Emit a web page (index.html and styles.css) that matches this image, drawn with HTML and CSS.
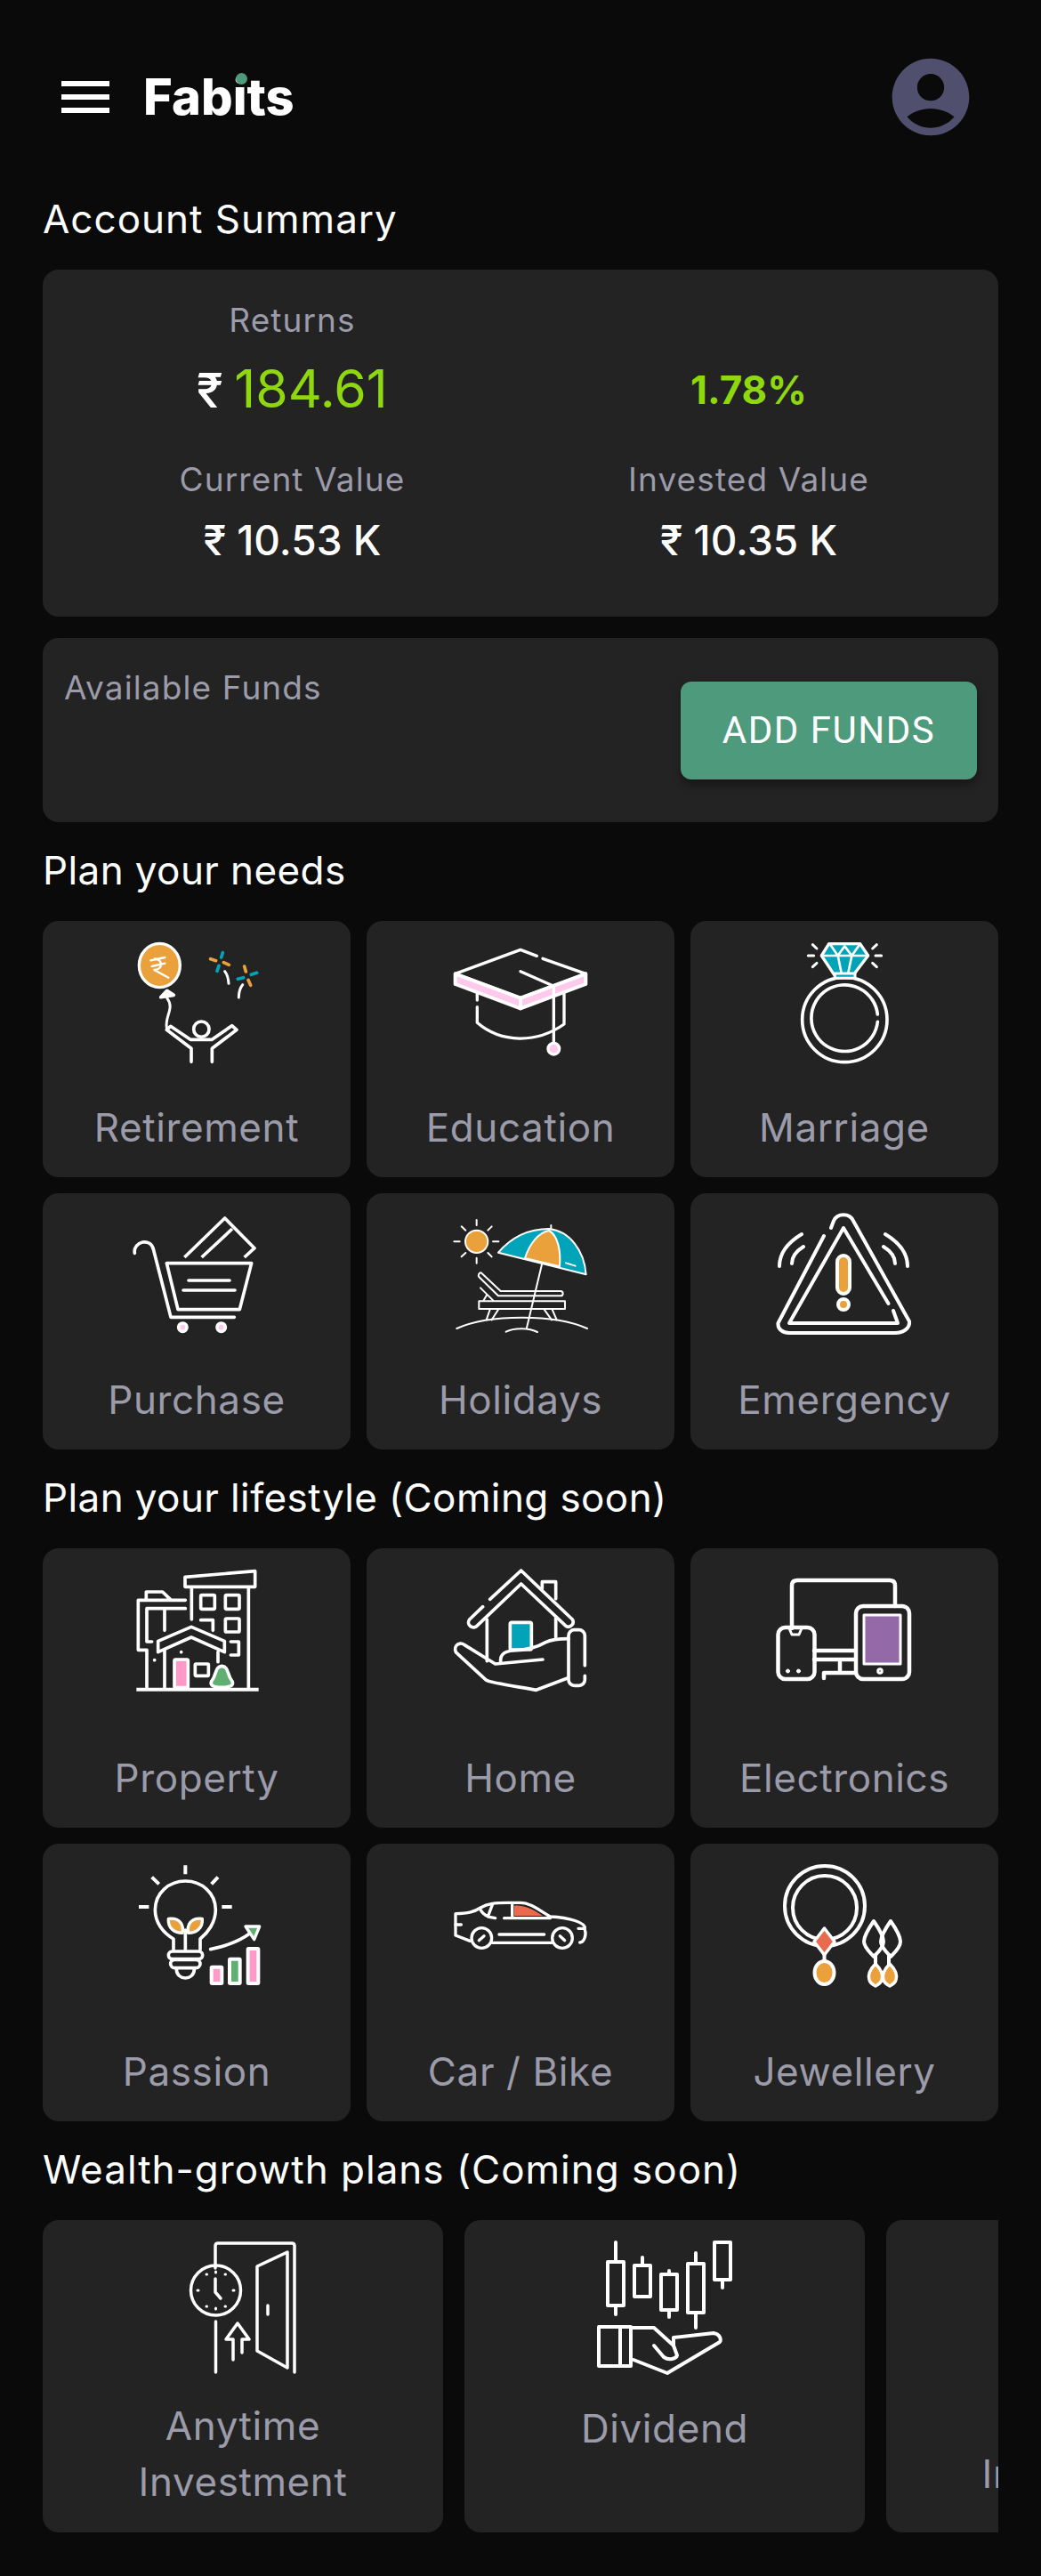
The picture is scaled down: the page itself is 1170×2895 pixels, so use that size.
FILE: index.html
```html
<!DOCTYPE html>
<html lang="en">
<head>
    <meta charset="UTF-8">
    <meta name="viewport" content="width=device-width, initial-scale=1.0">
    <title>Fabits</title>
    <link rel="stylesheet" href="styles.css">
</head>
<body>

    <header class="topbar">
        <div class="brand">
            <div class="menu-icon"><span></span><span></span><span></span></div>
            <div class="logo">Fabits<span class="logo-dot"></span></div>
        </div>
        <svg class="avatar" viewBox="0 0 24 24"><path d="M12 2C6.48 2 2 6.48 2 12s4.48 10 10 10 10-4.48 10-10S17.52 2 12 2zm0 4c1.93 0 3.5 1.57 3.5 3.5S13.93 13 12 13s-3.5-1.57-3.5-3.5S10.07 6 12 6zm0 14c-2.03 0-4.43-.82-6.14-2.88C7.55 15.8 9.68 15 12 15s4.45.8 6.14 2.12C16.43 19.18 14.03 20 12 20z"/></svg>
    </header>

    <main class="content">
        <section>
            <h2 class="section-title">Account Summary</h2>
            <div class="card summary">
                <div class="stat">
                    <div class="stat-label">Returns</div>
                    <div class="stat-value stat-value-big"><span class="rupee">₹</span> <span class="green">184.61</span></div>
                </div>
                <div class="stat">
                    <div class="stat-label"></div>
                    <div class="stat-value stat-value-big"><span class="green percent">1.78%</span></div>
                </div>
                <div class="stat stat-lower">
                    <div class="stat-label">Current Value</div>
                    <div class="stat-value">₹ 10.53 K</div>
                </div>
                <div class="stat stat-lower">
                    <div class="stat-label">Invested Value</div>
                    <div class="stat-value">₹ 10.35 K</div>
                </div>
            </div>
            <div class="card funds">
                <div class="funds-label">Available Funds</div>
                <button class="add-funds">ADD FUNDS</button>
            </div>
        </section>

        <section>
            <h2 class="section-title title-tight">Plan your needs</h2>
            <div class="grid grid-needs">
                <div class="card tile">
                    <svg class="icon" viewBox="78 30 510 450" stroke-width="11">
                        <ellipse cx="208" cy="135" rx="69" ry="74" class="orange" stroke-width="10"/>
                        <path d="M178 118L226 108M182 138L226 128M192 112C218 112 222 150 190 150L238 176" stroke-width="7"/>
                        <path d="M233 220L256 235L212 242Z" class="white"/>
                        <path d="M233 245C260 280 225 305 232 345" stroke-width="9"/>
                        <circle cx="349" cy="350" r="26"/>
                        <path d="M315 460V415L232 352L245 340L312 385H385L452 338L468 352L385 415V460"/>
                        <path d="M421 92L416 108M402 154L408 136M517 166L536 160M472 181L491 176" class="line-teal"/>
                        <path d="M380 113L398 119M424 125L442 133M494 138L499 156M507 184L515 202" class="line-orange"/>
                        <path d="M428 155C436 165 440 180 441 196M488 200C478 212 475 228 475 243" stroke-width="9"/>
                    </svg>
                    <div class="tile-label">Retirement</div>
                </div>
                <div class="card tile">
                    <svg class="icon" viewBox="30 0 510 450" stroke-width="10">
                        <path d="M65 133L285 215V250L65 168Z" class="pink" stroke-width="12"/>
                        <path d="M285 215L505 133V168L285 250Z" class="pink" stroke-width="12"/>
                        <path d="M340 73L285 52L65 133L285 215L505 133L360 82"/>
                        <path d="M285 125L397 175V365"/>
                        <circle cx="397" cy="386" r="19" class="pink"/>
                        <path d="M139 200V222M139 245V298C220 368 340 368 432 303V200"/>
                    </svg>
                    <div class="tile-label">Education</div>
                </div>
                <div class="card tile">
                    <svg class="icon" viewBox="1122 0 510 450" stroke-width="11">
                        <circle cx="1378" cy="288" r="143"/>
                        <path d="M1489 270A112 112 0 1 0 1489 295"/>
                        <path d="M1325 32H1430L1457 72L1405 140H1345L1300 72Z" class="teal" stroke-width="10"/>
                        <path d="M1300 72H1457M1330 35L1355 72L1378 40L1402 72L1428 35M1355 72L1367 130M1402 72L1390 130" stroke-width="8"/>
                        <rect x="1345" y="132" width="68" height="16" class="teal" stroke-width="9"/>
                        <path d="M1270 35L1284 48M1255 72H1274M1270 110L1284 97M1486 35L1472 48M1482 72H1502M1486 110L1472 97" stroke-width="9"/>
                    </svg>
                    <div class="tile-label">Marriage</div>
                </div>
                <div class="card tile">
                    <svg class="icon" viewBox="18 3 510 450" stroke-width="11">
                        <path d="M64 160C58 120 120 105 128 150L186 376H400"/>
                        <path d="M172 194H458L418 350H210Z"/>
                        <path d="M246 252H384M228 285H402"/>
                        <circle cx="226" cy="410" r="14" class="pink"/>
                        <circle cx="356" cy="410" r="14" class="pink"/>
                        <path d="M232 174L368 42L468 143L434 174M290 174L393 78" stroke-linecap="butt"/>
                    </svg>
                    <div class="tile-label">Purchase</div>
                </div>
                <div class="card tile">
                    <svg class="icon" viewBox="1110 3 510 450" stroke-width="6">
                        <circle cx="1217" cy="121" r="38" class="orange"/>
                        <path d="M1217 48V66M1217 176V194M1141 121H1160M1272 121H1291M1166 70L1180 83M1268 70L1255 83M1166 172L1180 159M1268 172L1255 159"/>
                        <path d="M1290 158C1340 100 1400 78 1461 78C1530 85 1580 150 1586 232Z" class="teal"/>
                        <path d="M1380 177C1395 130 1425 90 1461 84C1490 100 1502 150 1497 205Z" class="orange"/>
                        <path d="M1518 193L1550 203M1468 66V78M1437 198L1386 412M1316 425C1345 410 1395 412 1422 426"/>
                        <path d="M1232 226L1298 288H1500A8 8 0 0 1 1500 304H1290L1225 240A9 9 0 0 1 1232 226Z"/>
                        <path d="M1230 277L1273 320M1252 300L1240 320"/>
                        <rect x="1225" y="322" width="290" height="26"/>
                        <path d="M1262 350L1250 385M1290 350L1268 385M1445 350L1470 385M1472 350L1487 385"/>
                        <path d="M1150 414C1260 365 1480 365 1590 414"/>
                    </svg>
                    <div class="tile-label">Holidays</div>
                </div>
                <div class="card tile">
                    <svg class="icon" viewBox="864 1356 170 150" stroke-width="4">
                        <path d="M926 1389L874.5 1487C874 1494 880 1498 887 1498H1006C1016 1498 1023 1492 1022 1485L959 1372C955 1363 941 1363 937 1372L934 1380"/>
                        <path d="M998.5 1465L948 1380L887 1487H1009L1004 1473"/>
                        <rect x="941" y="1411" width="14" height="43" rx="7" class="orange"/>
                        <circle cx="948" cy="1466" r="6" class="orange"/>
                        <path d="M901 1387C886 1396 876 1408 876 1423M903 1401C895 1406 890 1412 890 1420M995 1387C1010 1396 1020 1408 1020 1423M993 1401C1001 1406 1006 1412 1006 1420"/>
                    </svg>
                    <div class="tile-label">Emergency</div>
                </div>
            </div>
        </section>

        <section>
            <h2 class="section-title title-tight">Plan your lifestyle (Coming soon)</h2>
            <div class="grid grid-lifestyle">
                <div class="card tile">
                    <svg class="icon" viewBox="-12 0 510 450" stroke-width="11">
                        <path d="M204 52L440 32V85H204Z"/>
                        <path d="M226 195V88M418 88V425"/>
                        <rect x="257" y="113" width="47" height="47" rx="4"/>
                        <rect x="340" y="113" width="47" height="47" rx="4"/>
                        <rect x="340" y="192" width="47" height="45" rx="4"/>
                        <path d="M257 197H298V232M358 270H385V315H358"/>
                        <path d="M205 130H46V298H75V425M205 158H75V270H92M135 165V232M73 125V102H128L155 128"/>
                        <path d="M113 268L225 220L337 268V305L225 255L113 305Z"/>
                        <path d="M135 300V425M315 305V338"/>
                        <rect x="168" y="330" width="46" height="95" rx="4" class="rose"/>
                        <rect x="238" y="345" width="45" height="40" rx="3"/>
                        <path d="M191 305H191.1M101 332H101.1"/>
                        <path d="M328 352C352 355 345 380 362 402C372 420 350 424 328 424C306 424 284 420 294 402C311 380 304 355 328 352Z" class="leaf"/>
                        <path d="M40 431H452" stroke-linecap="butt" stroke-width="12"/>
                    </svg>
                    <div class="tile-label">Property</div>
                </div>
                <div class="card tile">
                    <svg class="icon" viewBox="1080 0 510 450" stroke-width="11">
                        <rect x="1300" y="205" width="72" height="92" rx="5" class="teal"/>
                        <path d="M1232 127L1337 30L1510 195A16 16 0 0 1 1488 217L1337 75L1190 215A15 15 0 0 1 1163 195L1208 152"/>
                        <path d="M1408 90V68H1454V125M1222 195V335M1454 190V255"/>
                        <path d="M1268 340C1265 310 1285 302 1310 300C1360 298 1390 290 1420 272C1440 262 1470 260 1497 260"/>
                        <path d="M1410 330L1250 345L1145 280A17 17 0 0 0 1122 310L1220 400C1235 410 1350 425 1388 433L1495 392"/>
                        <path d="M1552 350V250A20 20 0 0 0 1532 230H1517A20 20 0 0 0 1497 250V398A20 20 0 0 0 1517 418H1532A20 20 0 0 0 1552 398V385"/>
                    </svg>
                    <div class="tile-label">Home</div>
                </div>
                <div class="card tile">
                    <svg class="icon" viewBox="864 1755 170 150" stroke-width="4.5">
                        <path d="M890 1830V1782Q890 1776 896 1776H1000Q1006 1776 1006 1782V1805"/>
                        <path d="M915 1855H961M915 1865H961M926 1886V1880H962M944 1868V1878"/>
                        <rect x="962" y="1805" width="60" height="82" rx="8"/>
                        <rect x="971" y="1815" width="41" height="55" class="purple" stroke-width="3"/>
                        <circle cx="989" cy="1878" r="1.5"/>
                        <rect x="874.5" y="1829" width="41" height="58" rx="8"/>
                        <path d="M887 1830L890 1837H898L901 1830" stroke-width="3"/>
                        <circle cx="885.5" cy="1878" r="2" class="white" stroke-width="1"/>
                        <circle cx="897.5" cy="1878" r="2" class="white" stroke-width="1"/>
                    </svg>
                    <div class="tile-label">Electronics</div>
                </div>
                <div class="card tile">
                    <svg class="icon" viewBox="-12 -6 510 450" stroke-width="11">
                        <path d="M205 22V52M92 62L116 85M315 62L293 85M48 162H82M328 162H362" stroke-linecap="butt" stroke-width="12"/>
                        <path d="M165 305V270C130 250 103 215 103 172C103 115 150 75 205 75C260 75 307 115 307 172C307 215 280 250 255 270V305"/>
                        <rect x="148" y="312" width="115" height="26" rx="13"/>
                        <rect x="155" y="340" width="100" height="28" rx="14"/>
                        <path d="M175 372C175 412 235 412 235 372M205 305V240"/>
                        <path d="M148 202C190 198 200 225 195 250C170 250 145 235 148 202Z" class="orange" stroke-width="10"/>
                        <path d="M262 202C220 198 210 225 215 250C240 250 265 235 262 202Z" class="orange" stroke-width="10"/>
                        <path d="M290 305C340 295 385 280 425 250"/>
                        <path d="M408 228H455L437 272Z" class="leaf" stroke-width="10"/>
                        <rect x="293" y="365" width="35" height="55" rx="2" class="rose" stroke-width="12"/>
                        <rect x="354" y="338" width="35" height="82" rx="2" class="leaf" stroke-width="12"/>
                        <rect x="416" y="303" width="35" height="117" rx="2" class="rose" stroke-width="12"/>
                    </svg>
                    <div class="tile-label">Passion</div>
                </div>
                <div class="card tile">
                    <svg class="icon" viewBox="1080 -6 510 450" stroke-width="10">
                        <path d="M1314 158C1340 155 1370 165 1410 192H1314Z" class="coral" stroke="none"/>
                        <path d="M1135 222H1116V185C1160 185 1180 178 1200 165C1225 150 1250 148 1290 148H1335C1370 148 1400 175 1435 195C1500 198 1555 215 1552 235H1530"/>
                        <path d="M1116 222V258L1165 277M1240 283H1440M1552 240C1558 255 1550 282 1535 282"/>
                        <circle cx="1204" cy="267" r="34"/>
                        <circle cx="1476" cy="267" r="34"/>
                        <path d="M1195 275L1212 260M1468 260L1484 275M1263 255H1415"/>
                        <path d="M1200 172C1210 190 1225 198 1250 200M1240 155L1225 195M1280 200H1435M1307 155V195"/>
                    </svg>
                    <div class="tile-label">Car / Bike</div>
                </div>
                <div class="card tile">
                    <svg class="icon" viewBox="864 2088 170 150" stroke-width="4">
                        <circle cx="927" cy="2143" r="45"/>
                        <circle cx="927" cy="2145" r="36"/>
                        <path d="M926.5 2168L938 2183L926.5 2198L915 2183Z" class="coral" stroke-width="3.5"/>
                        <path d="M926.5 2198V2206"/>
                        <ellipse cx="926.5" cy="2218" rx="11" ry="13" class="orange"/>
                        <path d="M982 2160C975 2170 971 2178 971 2183C971 2190 980 2197 982 2200C985 2197 993 2190 993 2183C993 2178 989 2170 982 2160Z"/>
                        <path d="M1001 2160C994 2170 990 2178 990 2183C990 2190 999 2197 1001 2200C1004 2197 1012 2190 1012 2183C1012 2178 1008 2170 1001 2160Z"/>
                        <path d="M984 2198V2208M999 2198V2208"/>
                        <path d="M984 2208C990 2214 993 2220 991 2226C990 2230 986 2232 984 2233C982 2232 978 2230 977 2226C975 2220 978 2214 984 2208Z" class="orange" stroke-width="3.5"/>
                        <path d="M1000 2208C1006 2214 1009 2220 1007 2226C1006 2230 1002 2232 1000 2233C998 2232 994 2230 993 2226C991 2220 994 2214 1000 2208Z" class="orange" stroke-width="3.5"/>
                    </svg>
                    <div class="tile-label">Jewellery</div>
                </div>
            </div>
        </section>

        <section>
            <h2 class="section-title">Wealth-growth plans (Coming soon)</h2>
            <div class="plans">
                <div class="card tile plan">
                    <svg class="icon icon-plan" viewBox="188 2512 170 160" stroke-width="3.5">
                        <path d="M242 2550V2525Q242 2522 245 2522H328Q331 2522 331 2525V2667"/>
                        <path d="M323 2532L289 2548V2643L323 2662Z"/>
                        <path d="M301 2592V2602"/>
                        <circle cx="242.5" cy="2575" r="28"/>
                        <path d="M242 2562V2577L248 2584"/>
                        <path d="M242.5 2554V2555M242.5 2595V2596M222 2575H223M262 2575H263M232 2557H232.5M253 2557H253.5M232 2593H232.5M253 2593H253.5" stroke-width="3"/>
                        <path d="M242.5 2610V2667"/>
                        <path d="M262 2653V2630H254L267 2612L280 2630H272V2645"/>
                    </svg>
                    <div class="tile-label plan-label">Anytime Investment</div>
                </div>
                <div class="card tile plan">
                    <svg class="icon icon-plan" viewBox="662 2512 170 160" stroke-width="4">
                        <path d="M692 2521V2543M692 2592V2602M722 2538V2547M752 2553V2557M752 2597V2605M782 2533V2545M782 2600V2617M812 2563V2572"/>
                        <rect x="683" y="2543" width="18" height="49"/>
                        <rect x="713" y="2547" width="18" height="35"/>
                        <rect x="743" y="2557" width="18" height="40"/>
                        <rect x="773" y="2545" width="18" height="55"/>
                        <rect x="803" y="2521" width="18" height="42"/>
                        <rect x="673" y="2616" width="36" height="44"/>
                        <path d="M697 2616V2660"/>
                        <path d="M709 2617H735L757 2637V2628L802 2623C809 2624 811 2630 809 2633L750 2668L712 2653"/>
                        <path d="M735 2637L746 2650C752 2654 760 2652 761 2648L757 2637"/>
                    </svg>
                    <div class="tile-label plan-label plan-label-single">Dividend</div>
                </div>
                <div class="card tile plan">
                    <div class="icon-plan"></div>
                    <div class="tile-label plan-label plan-label-low">Investment</div>
                </div>
            </div>
        </section>
    </main>

</body>
</html>
```

FILE: styles.css
```css
body {
    margin: 0;
    background-color: #0a0a0a;
    color: #fff;
    font-family: Inter, "Noto Sans", sans-serif;
}

.topbar {
    box-sizing: border-box;
    height: 216px;
    padding: 2px 72px 0 69px;
    display: flex;
    align-items: center;
    justify-content: space-between;
}

.brand {
    display: flex;
    align-items: center;
    gap: 38px;
}

.menu-icon {
    width: 54px;
    display: flex;
    flex-direction: column;
    gap: 9px;
}

.menu-icon span {
    display: block;
    height: 6px;
    background-color: #fff;
}

.logo {
    position: relative;
    font-size: 56px;
    font-weight: 800;
    line-height: 60px;
}

.logo-dot {
    position: absolute;
    left: 104px;
    top: 3px;
    width: 13px;
    height: 13px;
    border-radius: 50%;
    background-color: #4e9a7c;
}

.avatar {
    width: 104px;
    height: 104px;
    fill: #50506e;
}

.content {
    padding: 0 48px 48px;
    display: flex;
    flex-direction: column;
    gap: 24px;
}

.section-title {
    margin: 0 0 27px;
    font-size: 44px;
    font-weight: 400;
    letter-spacing: 1px;
    line-height: 60px;
}

.title-tight {
    letter-spacing: 0.4px;
}

.card {
    background-color: #232323;
    border-radius: 18px;
}

.summary {
    box-sizing: border-box;
    height: 390px;
    padding: 30px 24px 0;
    display: grid;
    grid-template-columns: 1fr 1fr;
    grid-template-rows: 154px 1fr;
}

.stat {
    text-align: center;
}

.stat-lower {
    padding-top: 25px;
}

.stat-label {
    min-height: 54px;
    font-size: 37px;
    letter-spacing: 1.1px;
    line-height: 54px;
    color: #9b9ba9;
}

.stat-value {
    height: 82px;
    font-size: 46px;
    font-weight: 500;
    line-height: 82px;
}

.stat-value-big {
    height: 100px;
    line-height: 100px;
}

.rupee {
    font-size: 54px;
}

.green {
    color: #8fd80f;
    font-size: 59px;
    font-weight: 400;
}

.green.percent {
    font-size: 44px;
    font-weight: 700;
}

.funds {
    box-sizing: border-box;
    height: 207px;
    margin-top: 24px;
    padding: 48px 24px;
    display: flex;
    justify-content: space-between;
    align-items: center;
}

.funds-label {
    align-self: flex-start;
    margin-top: -19px;
    font-size: 37px;
    letter-spacing: 1.1px;
    line-height: 54px;
    color: #9b9ba9;
}

.add-funds {
    width: 333px;
    height: 110px;
    border: none;
    border-radius: 12px;
    background-color: #4e9a7c;
    box-shadow: 0 6px 10px rgba(0, 0, 0, 0.35);
    color: #fff;
    font-family: Roboto, sans-serif;
    font-size: 42px;
    font-weight: 400;
    letter-spacing: 1.5px;
}

.grid {
    display: grid;
    grid-template-columns: repeat(3, 1fr);
    gap: 18px;
}

.grid-needs {
    grid-auto-rows: 288px;
}

.grid-lifestyle {
    grid-template-rows: 314px 312px;
}

.tile {
    box-sizing: border-box;
    padding: 15px 0 24px;
    display: flex;
    flex-direction: column;
    align-items: center;
}

.tile-label {
    margin-top: auto;
    font-size: 44px;
    letter-spacing: 0.6px;
    line-height: 64px;
    color: #9b9ba9;
    text-align: center;
}

.icon {
    width: 170px;
    height: 150px;
    flex: none;
    fill: none;
    stroke: #fff;
    stroke-linecap: round;
    stroke-linejoin: round;
}

.plans {
    display: flex;
    gap: 24px;
    overflow: hidden;
}

.plan {
    flex: 0 0 450px;
    height: 351px;
    padding-top: 16px;
}

.plan-label {
    margin-top: 24px;
    width: 300px;
    line-height: 63px;
}

.icon-plan {
    width: 170px;
    height: 160px;
}

.plan-label-single {
    margin-top: 27px;
}

.plan-label-low {
    margin-top: 78px;
}

/* icon fills */
.orange { fill: #eaa13b; }
.teal { fill: #00a3b8; }
.pink { fill: #ffc9ec; }
.rose { fill: #ff99c8; }
.leaf { fill: #5fae72; }
.purple { fill: #9469a8; }
.coral { fill: #ea6a4e; }
.white { fill: #fff; }
.line-teal { stroke: #00a3b8; }
.line-orange { stroke: #eaa13b; }
```
